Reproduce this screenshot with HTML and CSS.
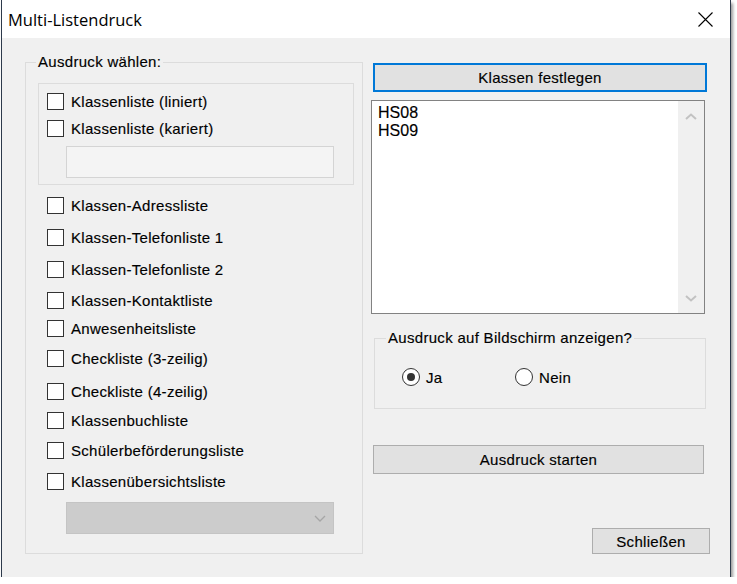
FILE: index.html
```html
<!DOCTYPE html>
<html>
<head>
    <title>Multi-Listendruck</title>
    <link rel="stylesheet" href="styles.css">
</head>
<body>
    <div class="window">
        <div class="titlebar">
            <span class="title">Multi-Listendruck</span>
            <svg class="close" width="15" height="15" viewBox="0 0 15 15">
                <path d="M0.5 0.5 L14.5 14.5 M14.5 0.5 L0.5 14.5" stroke="#000" stroke-width="1.1" fill="none"/>
            </svg>
        </div>
        <div class="content">
            <fieldset class="group group-left">
                <legend>Ausdruck wählen:</legend>
                <div class="inner-box">
                    <label class="check"><span class="box"></span>Klassenliste (liniert)</label>
                    <label class="check"><span class="box"></span>Klassenliste (kariert)</label>
                    <div class="textbox"></div>
                </div>
                <div class="check-list">
                    <label class="check"><span class="box"></span>Klassen-Adressliste</label>
                    <label class="check"><span class="box"></span>Klassen-Telefonliste 1</label>
                    <label class="check"><span class="box"></span>Klassen-Telefonliste 2</label>
                    <label class="check"><span class="box"></span>Klassen-Kontaktliste</label>
                    <label class="check"><span class="box"></span>Anwesenheitsliste</label>
                    <label class="check"><span class="box"></span>Checkliste (3-zeilig)</label>
                    <label class="check"><span class="box"></span>Checkliste (4-zeilig)</label>
                    <label class="check"><span class="box"></span>Klassenbuchliste</label>
                    <label class="check"><span class="box"></span>Schülerbeförderungsliste</label>
                    <label class="check"><span class="box"></span>Klassenübersichtsliste</label>
                </div>
                <div class="combo">
                    <svg width="12" height="7" viewBox="0 0 12 7"><path d="M1 1 L6 6 L11 1" stroke="#a6a6a6" stroke-width="1.3" fill="none"/></svg>
                </div>
            </fieldset>

            <div class="right">
                <button class="btn btn-focus">Klassen festlegen</button>
                <div class="listbox">
                    <div class="items">
                        <div>HS08</div>
                        <div>HS09</div>
                    </div>
                    <div class="scrollbar">
                        <svg width="12" height="7" viewBox="0 0 12 7"><path d="M1 6 L6 1.5 L11 6" stroke="#c2c2c2" stroke-width="2" fill="none"/></svg>
                        <svg width="12" height="7" viewBox="0 0 12 7"><path d="M1 1 L6 5.5 L11 1" stroke="#c2c2c2" stroke-width="2" fill="none"/></svg>
                    </div>
                </div>
                <fieldset class="group group-right">
                    <legend>Ausdruck auf Bildschirm anzeigen?</legend>
                    <div class="radios">
                        <label class="radio radio-first"><span class="circle checked"></span>Ja</label>
                        <label class="radio"><span class="circle"></span>Nein</label>
                    </div>
                </fieldset>
                <button class="btn btn-start">Ausdruck starten</button>
                <button class="btn btn-close">Schließen</button>
            </div>
        </div>
    </div>
</body>
</html>
```

FILE: styles.css
```css
* {
    box-sizing: border-box;
}
body {
    margin: 0;
    background: #fff;
    font-family: "Liberation Sans", Arial, sans-serif;
    font-size: 15px;
    letter-spacing: 0.3px;
    color: #000;
    -webkit-text-stroke: 0.15px #000;
}
.window {
    margin-left: 1px;
    width: 730px;
    height: 577px;
    background: #f0f0f0;
    border-left: 1px solid #2d3a4b;
    border-right: 1px solid #2d3a4b;
    box-shadow: 2px 3px 3px rgba(0, 0, 0, 0.4);
}
.titlebar {
    height: 38px;
    background: #fff;
    display: flex;
    align-items: center;
    justify-content: space-between;
    padding: 0 17px 0 6px;
}
.title {
    font-family: "Open Sans", "Liberation Sans", sans-serif;
    font-size: 16.5px;
    letter-spacing: 0;
    -webkit-text-stroke: 0;
    color: #000;
}
.content {
    display: flex;
    padding: 16px 0 0 23px;
}

/* group boxes */
.group {
    margin: 0;
    padding: 0;
    border: 1px solid #dcdcdc;
    min-width: 0;
}
.group legend {
    padding: 0 2px;
    line-height: 16px;
    color: #000;
}
.group-left {
    width: 338px;
    height: 500px;
}
.group-left legend {
    margin-left: 10px;
}
.inner-box {
    margin: 13px 0 0 12px;
    width: 316px;
    border: 1px solid #dcdcdc;
    padding: 8px 0 6px 8px;
}
.inner-box .check + .check {
    margin-top: 9px;
}
.textbox {
    margin: 9px 0 0 19px;
    width: 268px;
    height: 32px;
    background: #f4f4f4;
    border: 1px solid #d4d4d4;
}
.check-list {
    display: grid;
    grid-template-rows: 32px 32px 31px 28px 30px 33px 29px 30px 31px 18px;
    margin: 11px 0 0 21px;
}
.check {
    display: flex;
    align-items: center;
    height: 18px;
    white-space: nowrap;
}
.check .box {
    width: 17px;
    height: 17px;
    border: 1px solid #333;
    background: #fff;
    margin-right: 7px;
    flex: none;
}
.combo {
    margin: 12px 0 0 40px;
    width: 268px;
    height: 32px;
    background: #cccccc;
    border: 1px solid #c4c4c4;
    display: flex;
    align-items: center;
    justify-content: flex-end;
    padding-right: 7px;
}

/* right column */
.right {
    display: flex;
    flex-direction: column;
    width: 339px;
    margin-left: 8px;
}
.btn {
    font: inherit;
    letter-spacing: inherit;
    color: #000;
    background: #e1e1e1;
    border: 1px solid #adadad;
    padding: 0;
    margin: 0;
}
.btn-focus {
    margin: 9px 0 0 2px;
    width: 334px;
    height: 29px;
    border: 2px solid #0078d7;
}
.listbox {
    margin-top: 8px;
    width: 334px;
    height: 214px;
    background: #fff;
    border: 1px solid #828282;
    display: flex;
}
.items {
    flex: 1;
    padding: 3px 0 0 6px;
    font-size: 16px;
    letter-spacing: 0;
    line-height: 18px;
}
.scrollbar {
    width: 26px;
    background: #f0f0f0;
    display: flex;
    flex-direction: column;
    align-items: center;
    justify-content: space-between;
    padding: 12px 0 11px;
}
.group-right {
    margin: 16px 0 0 3px;
    width: 332px;
    height: 79px;
}
.group-right legend {
    margin-left: 11px;
}
.radios {
    display: flex;
    margin-top: 22px;
    padding-left: 27px;
}
.radio {
    display: flex;
    align-items: center;
    height: 18px;
}
.radio-first {
    width: 113px;
}
.circle {
    width: 18px;
    height: 18px;
    border: 1px solid #333;
    border-radius: 50%;
    background: #fff;
    margin-right: 6px;
    display: flex;
    align-items: center;
    justify-content: center;
}
.circle.checked::after {
    content: "";
    width: 8px;
    height: 8px;
    border-radius: 50%;
    background: #333;
}
.btn-start {
    margin: 36px 0 0 2px;
    width: 331px;
    height: 29px;
}
.btn-close {
    margin-top: 54px;
    align-self: flex-end;
    width: 118px;
    height: 26px;
}
```
